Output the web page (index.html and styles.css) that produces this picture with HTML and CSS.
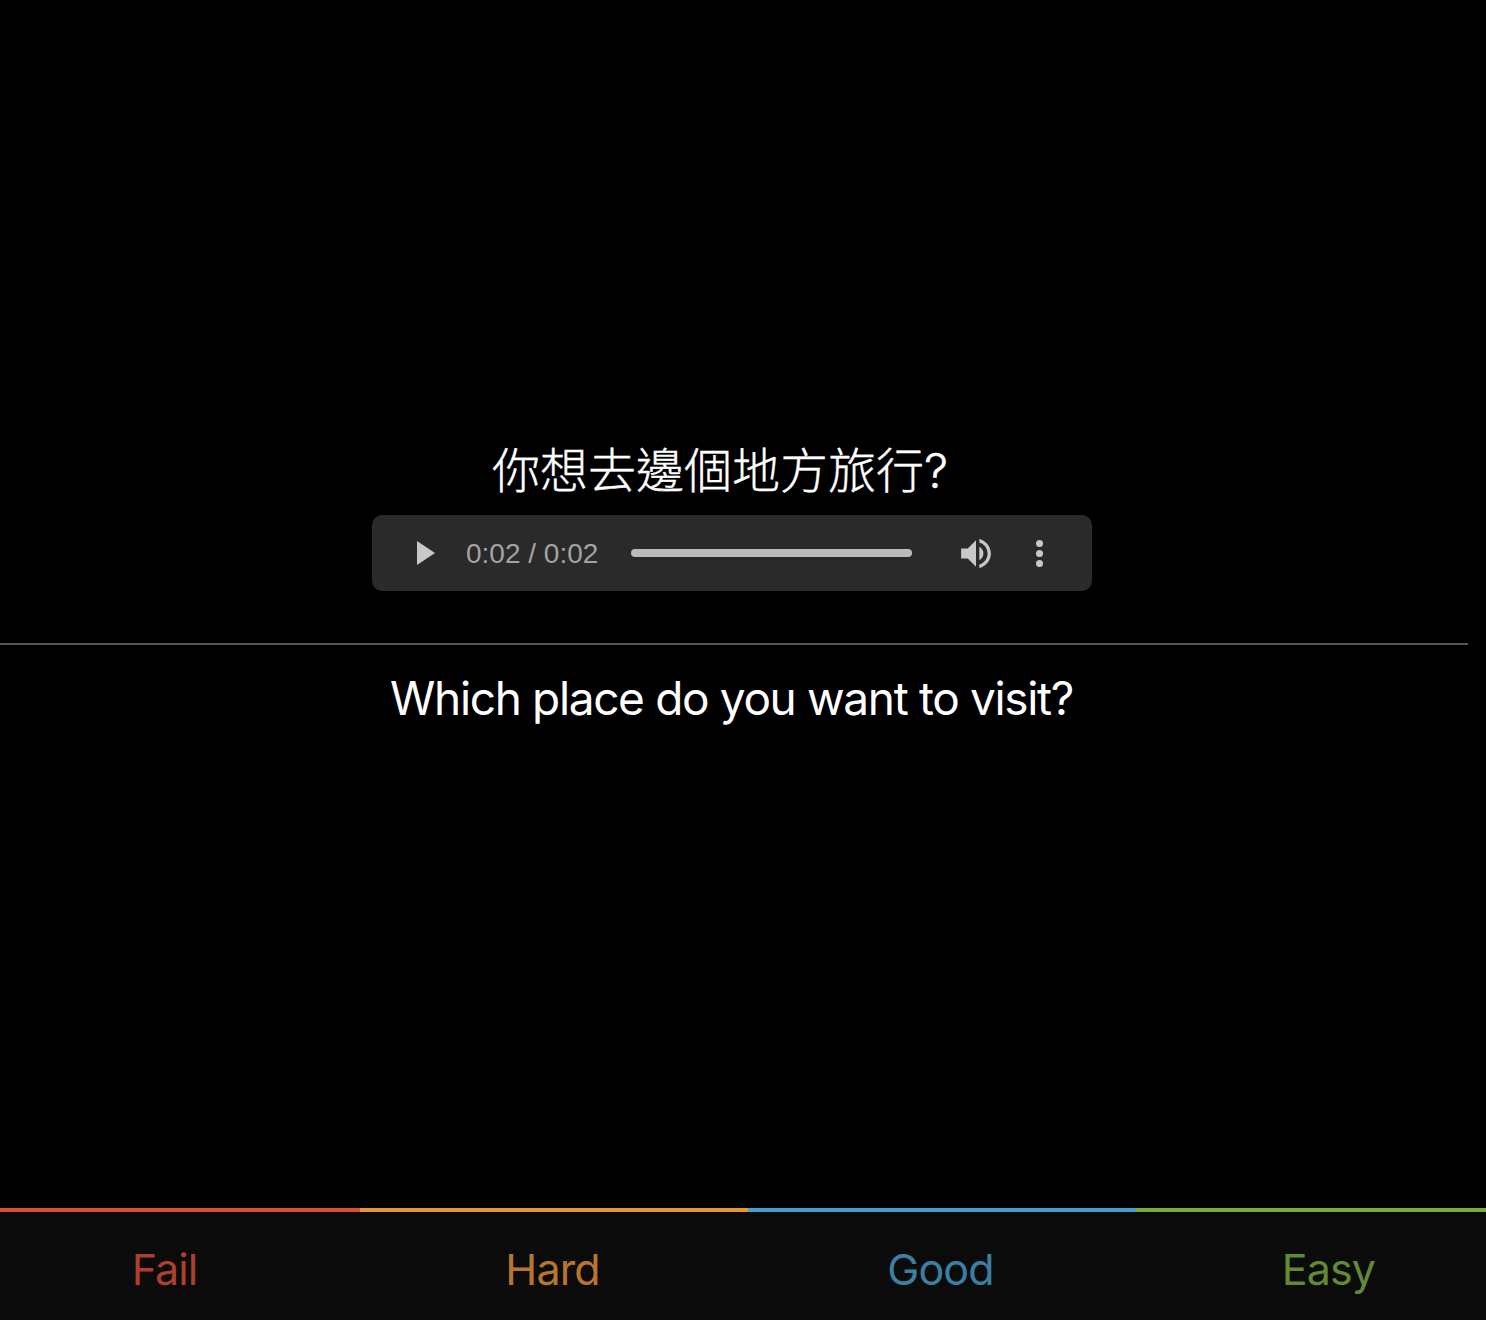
FILE: index.html
```html
<!DOCTYPE html>
<html lang="en">
<head>
    <meta charset="UTF-8">
    <meta name="viewport" content="width=device-width, initial-scale=1.0">
    <title>Review</title>
    <link rel="stylesheet" href="styles.css">
</head>
<body>

<div class="card">
    <div class="question" lang="zh-Hant">你想去邊個地方旅行?</div>
    <div class="player">
        <svg class="play-icon" viewBox="0 0 18 24"><path d="M0 0L18 12L0 24z"/></svg>
        <span class="time">0:02 / 0:02</span>
        <div class="track"></div>
        <svg class="volume-icon" viewBox="3 3.23 18 17.54"><path d="M3 9v6h4l5 5V4L7 9H3zm13.5 3c0-1.77-1.02-3.29-2.5-4.03v8.05c1.48-.73 2.5-2.25 2.5-4.02zM14 3.23v2.06c2.89.86 5 3.54 5 6.71s-2.11 5.85-5 6.71v2.06c4.01-.91 7-4.49 7-8.77s-2.99-7.86-7-8.77z"/></svg>
        <div class="menu-dots"><span></span><span></span><span></span></div>
    </div>
    <hr class="divider">
    <div class="answer">Which place do you want to visit?</div>
</div>

<div class="answer-bar">
    <button class="answer-btn fail">Fail</button>
    <button class="answer-btn hard">Hard</button>
    <button class="answer-btn good">Good</button>
    <button class="answer-btn easy">Easy</button>
</div>

</body>
</html>
```

FILE: styles.css
```css
html {
    height: 100%;
}
body {
    margin: 0;
    height: 100%;
    display: flex;
    flex-direction: column;
    overflow: hidden;
    background-color: #000;
    color: #fff;
    font-family: Inter, "Noto Sans CJK TC", sans-serif;
}
.card {
    flex: 1;
    width: 1468px;
    padding-top: 440px;
}
.question {
    width: 1440px;
    font-size: 48px;
    font-weight: 300;
    -webkit-text-stroke: 0.4px #fff;
    line-height: 62px;
    text-align: center;
}
.player {
    width: 720px;
    height: 76px;
    margin: 13px 0 0 372px;
    display: flex;
    align-items: center;
    background-color: #2a2a2a;
    border-radius: 10px;
    color: #a3a3a3;
}
.play-icon {
    width: 18px;
    height: 24px;
    margin-left: 45px;
    fill: #c8c8c8;
}
.time {
    margin-left: 31px;
    width: 132px;
    padding-top: 2px;
    font-family: "Liberation Sans", Arial, sans-serif;
    font-size: 28px;
    white-space: nowrap;
}
.track {
    width: 281px;
    height: 8px;
    margin-left: 33px;
    background-color: #bbb;
    border-radius: 4px;
}
.volume-icon {
    width: 30px;
    height: 29px;
    margin-left: 49px;
    fill: #c8c8c8;
}
.menu-dots {
    margin-left: 45px;
    display: flex;
    flex-direction: column;
    gap: 3px;
}
.menu-dots span {
    width: 7px;
    height: 7px;
    border-radius: 50%;
    background-color: #c8c8c8;
}
.divider {
    height: 2px;
    margin: 52px 0 0;
    border: none;
    background-color: #555;
}
.answer {
    width: 1463px;
    margin-top: 23px;
    font-size: 46px;
    font-weight: 400;
    letter-spacing: -1.35px;
    line-height: 60px;
    text-align: center;
}
.answer-bar {
    display: flex;
    margin-left: -28px;
    flex-shrink: 0;
}
.answer-btn {
    flex: 0 0 388px;
    height: 112px;
    padding: 6px 3px 0 0;
    border: none;
    border-top: 4px solid;
    background-color: #0b0b0b;
    font-family: Inter, sans-serif;
    font-size: 43px;
    font-weight: 370;
    letter-spacing: -0.9px;
}
.fail {
    border-top-color: #d9503a;
    color: #ad3f2e;
}
.hard {
    border-top-color: #e59536;
    color: #b7772b;
}
.good {
    border-top-color: #47a0cb;
    color: #3a80a3;
}
.easy {
    border-top-color: #79ab3d;
    color: #618a31;
}
```
